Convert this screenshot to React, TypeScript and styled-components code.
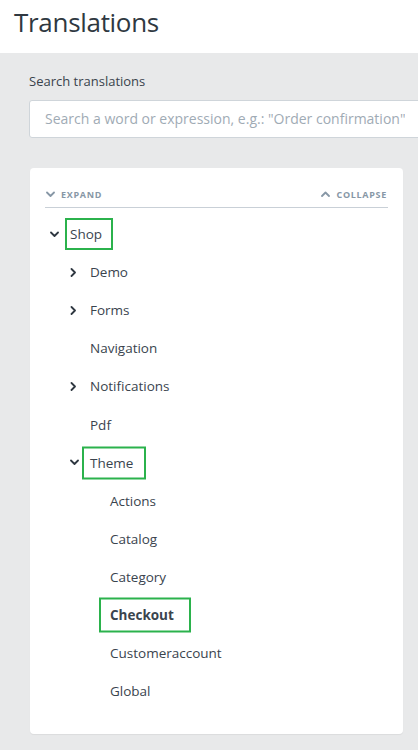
import React from "react";
import styled, { createGlobalStyle } from "styled-components";

const Global = createGlobalStyle`
  html, body { margin: 0; padding: 0; }
  body {
    font-family: "Open Sans", "Noto Sans", sans-serif;
    background: #e8e9ea;
    overflow: hidden;
    width: 418px;
  }
`;

const Page = styled.div`
  width: 418px;
  min-height: 750px;
  display: flex;
  flex-direction: column;
`;

const Header = styled.header`
  height: 53px;
  background: #ffffff;
  display: flex;
  align-items: center;
  padding-left: 14px;
  box-sizing: border-box;
`;

const Title = styled.h1`
  margin: 0;
  font-size: 26px;
  font-weight: 400;
  color: #2f3841;
  letter-spacing: -0.3px;
  line-height: 1;
  padding-bottom: 9px;
`;

const Main = styled.main`
  background: #e8e9ea;
  padding: 19px 0 17px 29px;
  display: flex;
  flex-direction: column;
`;

const FieldLabel = styled.label`
  font-size: 13px;
  color: #39434c;
  line-height: 18px;
  margin-bottom: 10px;
`;

const SearchInput = styled.input`
  width: 392px;
  height: 38px;
  box-sizing: border-box;
  border: 1px solid #cfd5da;
  border-radius: 3px;
  background: #ffffff;
  padding: 0 15px 2px 15px;
  font-family: "Open Sans", sans-serif;
  font-size: 14px;
  color: #39434c;
  outline: none;
  &::placeholder { color: #9fabb5; }
`;

const Card = styled.section`
  margin-top: 30px;
  margin-left: 1px;
  width: 373px;
  height: 566px;
  box-sizing: border-box;
  background: #ffffff;
  border-radius: 4px;
  box-shadow: 0 1px 1px rgba(0, 0, 0, 0.06);
  padding: 19px 15px 0 15px;
`;

const Toolbar = styled.div`
  display: flex;
  justify-content: space-between;
  align-items: center;
  height: 15px;
  padding: 0 1px 5px 1px;
  border-bottom: 1px solid #c9d0d7;
`;

const ToolButton = styled.button`
  border: 0;
  background: none;
  padding: 0;
  display: flex;
  align-items: center;
  gap: 6px;
  font-family: "Open Sans", sans-serif;
  font-weight: 700;
  font-size: 9px;
  letter-spacing: 0.7px;
  color: #8797a6;
  text-transform: uppercase;
  cursor: pointer;
`;

const Tree = styled.ul`
  list-style: none;
  margin: 7px 0 0 0;
  padding: 0;
`;

const Row = styled.li<{ $level: number }>`
  height: 38.1px;
  display: flex;
  align-items: center;
  padding-left: ${(p) => 5 + p.$level * 20}px;
`;

const Caret = styled.span`
  width: 20px;
  height: 38px;
  flex: none;
  display: flex;
  align-items: center;
  color: #2f3841;
`;

const Label = styled.span<{ $bold?: boolean }>`
  position: relative;
  font-size: 13.5px;
  color: #3a444e;
  font-weight: ${(p) => (p.$bold ? 700 : 400)};
  line-height: 20px;
`;

const Highlight = styled.span<{ $l: number; $r: number; $h: number }>`
  position: absolute;
  left: ${(p) => -p.$l}px;
  right: ${(p) => -p.$r}px;
  top: 50%;
  height: ${(p) => p.$h}px;
  transform: translateY(-50%);
  border: 2px solid #2bb24c;
  box-sizing: border-box;
  pointer-events: none;
`;

const Chevron = ({ dir }: { dir: "down" | "right" | "up" }) => {
  const d =
    dir === "down"
      ? "M1 1.5 L4.5 5 L8 1.5"
      : dir === "up"
      ? "M1 5 L4.5 1.5 L8 5"
      : "M1.5 1 L5 4.5 L1.5 8";
  const w = dir === "right" ? 7 : 9;
  const h = dir === "right" ? 9 : 7;
  return (
    <svg width={w} height={h} viewBox={`0 0 ${w} ${h}`} fill="none">
      <path d={d} stroke="currentColor" strokeWidth="1.8" strokeLinecap="round" strokeLinejoin="round" />
    </svg>
  );
};

type Node = {
  label: string;
  level: number;
  caret?: "down" | "right";
  bold?: boolean;
  hl?: { l: number; r: number; h: number };
};

const nodes: Node[] = [
  { label: "Shop", level: 0, caret: "down", hl: { l: 5, r: 11, h: 32 } },
  { label: "Demo", level: 1, caret: "right" },
  { label: "Forms", level: 1, caret: "right" },
  { label: "Navigation", level: 1 },
  { label: "Notifications", level: 1, caret: "right" },
  { label: "Pdf", level: 1 },
  { label: "Theme", level: 1, caret: "down", hl: { l: 8, r: 13, h: 33 } },
  { label: "Actions", level: 2 },
  { label: "Catalog", level: 2 },
  { label: "Category", level: 2 },
  { label: "Checkout", level: 2, bold: true, hl: { l: 11, r: 17, h: 35 } },
  { label: "Customeraccount", level: 2 },
  { label: "Global", level: 2 },
];

export default function App() {
  return (
    <Page>
      <Global />
      <Header>
        <Title>Translations</Title>
      </Header>
      <Main>
        <FieldLabel>Search translations</FieldLabel>
        <SearchInput placeholder={'Search a word or expression, e.g.: "Order confirmation"'} />
        <Card>
          <Toolbar>
            <ToolButton>
              <Chevron dir="down" />
              Expand
            </ToolButton>
            <ToolButton>
              <Chevron dir="up" />
              Collapse
            </ToolButton>
          </Toolbar>
          <Tree>
            {nodes.map((n) => (
              <Row key={n.label} $level={n.level}>
                <Caret>{n.caret && <Chevron dir={n.caret} />}</Caret>
                <Label $bold={n.bold}>
                  {n.label}
                  {n.hl && <Highlight $l={n.hl.l} $r={n.hl.r} $h={n.hl.h} />}
                </Label>
              </Row>
            ))}
          </Tree>
        </Card>
      </Main>
    </Page>
  );
}
